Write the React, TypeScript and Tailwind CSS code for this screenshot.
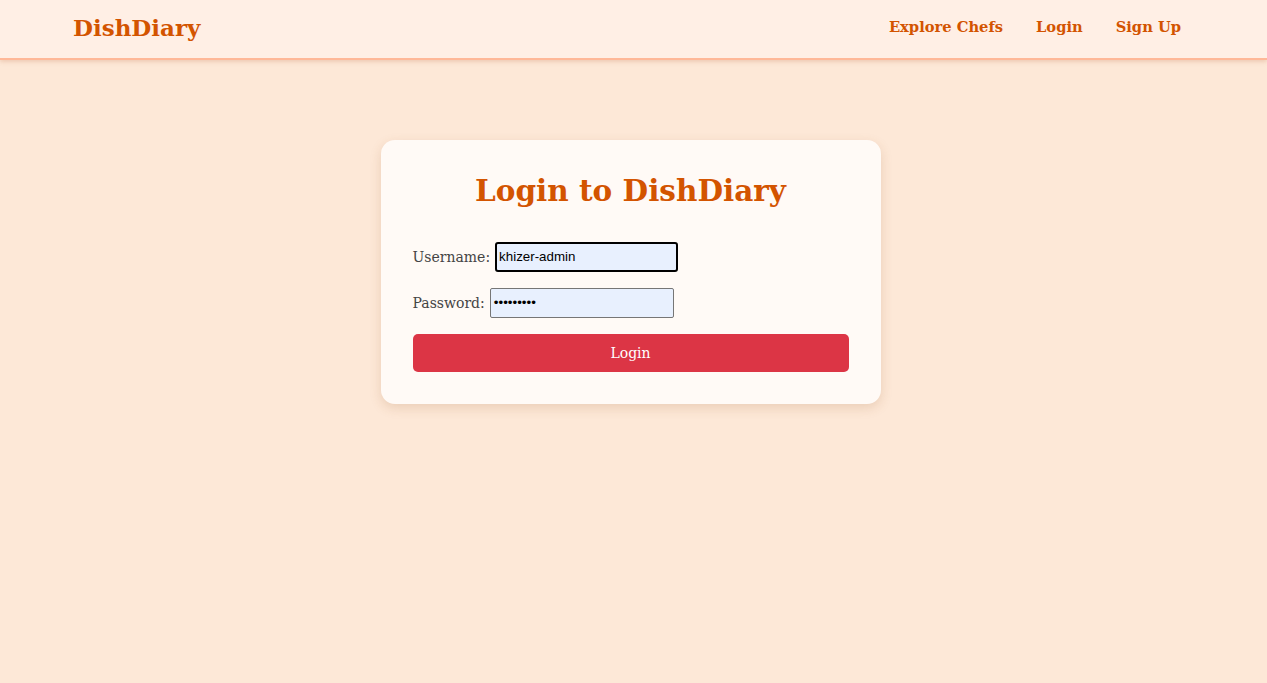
import React from "react";

const serif = "font-['DejaVu_Serif',Georgia,serif]";

export default function App() {
  return (
    <div className={`min-h-[683px] bg-[#fde8d7] ${serif}`}>
      <header className="h-[60px] bg-[#ffefe5] border-b-2 border-[#ffb898] shadow-[0_2px_4px_rgba(200,120,80,0.25)] flex items-center justify-between pl-[73px] pr-[86px] pb-[4px]">
        <div className="text-[#d35400] font-bold text-[23px] leading-none">DishDiary</div>
        <nav className="flex items-center gap-[33px] text-[#d35400] font-bold text-[14.7px] leading-none">
          <a>Explore Chefs</a>
          <a>Login</a>
          <a>Sign Up</a>
        </nav>
      </header>
      <main className="pt-[80px] pr-[6px]">
        <div className="mx-auto w-[500px] bg-[#fffaf6] rounded-[14px] shadow-[0_4px_12px_rgba(150,90,40,0.18)] px-8 pt-8 pb-8">
          <h2 className="text-center text-[#d35400] font-bold text-[29.5px] leading-[37px] mb-[33px]">
            Login to DishDiary
          </h2>
          <div className="flex items-center text-[#444] text-[14px] h-[30px]">
            <span>Username:</span>
            <div className="ml-[5px] w-[183px] h-[30px] border-2 border-black rounded-[3px] bg-[#e8f0fe] flex items-center pl-[2px] font-['Liberation_Sans',Arial,sans-serif] text-[13.33px] text-black">
              khizer-admin
            </div>
          </div>
          <div className="flex items-center text-[#444] text-[14px] h-[30px] mt-[16px]">
            <span>Password:</span>
            <div className="ml-[5px] w-[184px] h-[30px] border border-[#767676] rounded-[2px] bg-[#e8f0fe] flex items-center pl-[3px] font-['Liberation_Sans',Arial,sans-serif] text-[13.33px] text-black">
              •••••••••
            </div>
          </div>
          <button className="mt-[16px] w-full h-[38px] bg-[#dc3545] rounded-[5px] text-white text-[14px] flex items-center justify-center">
            Login
          </button>
        </div>
      </main>
    </div>
  );
}
